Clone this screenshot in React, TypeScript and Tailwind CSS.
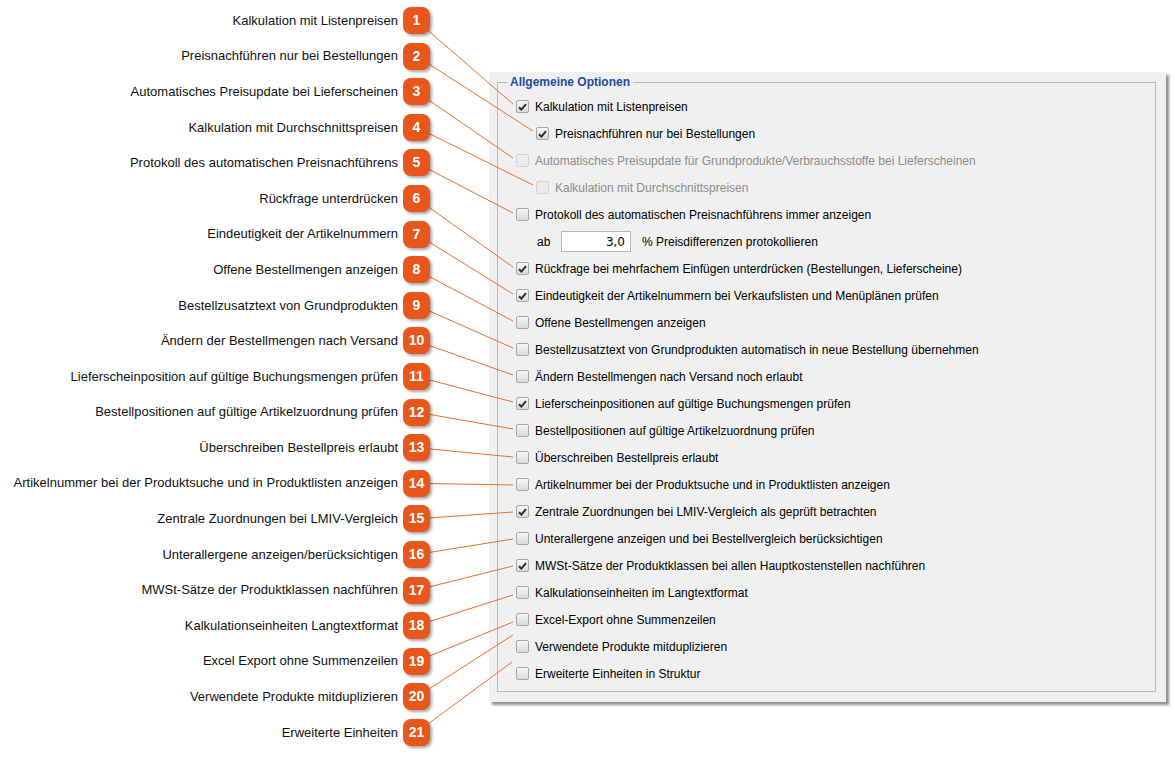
import React from "react";

const labels = [
  "Kalkulation mit Listenpreisen",
  "Preisnachführen nur bei Bestellungen",
  "Automatisches Preisupdate bei Lieferscheinen",
  "Kalkulation mit Durchschnittspreisen",
  "Protokoll des automatischen Preisnachführens",
  "Rückfrage unterdrücken",
  "Eindeutigkeit der Artikelnummern",
  "Offene Bestellmengen anzeigen",
  "Bestellzusatztext von Grundprodukten",
  "Ändern der Bestellmengen nach Versand",
  "Lieferscheinposition auf gültige Buchungsmengen prüfen",
  "Bestellpositionen auf gültige Artikelzuordnung prüfen",
  "Überschreiben Bestellpreis erlaubt",
  "Artikelnummer bei der Produktsuche und in Produktlisten anzeigen",
  "Zentrale Zuordnungen bei LMIV-Vergleich",
  "Unterallergene anzeigen/berücksichtigen",
  "MWSt-Sätze der Produktklassen nachführen",
  "Kalkulationseinheiten Langtextformat",
  "Excel Export ohne Summenzeilen",
  "Verwendete Produkte mitduplizieren",
  "Erweiterte Einheiten",
];

type Option = {
  text?: string;
  checked?: boolean;
  disabled?: boolean;
  indent?: boolean;
  threshold?: boolean;
};

const options: Option[] = [
  { text: "Kalkulation mit Listenpreisen", checked: true },
  { text: "Preisnachführen nur bei Bestellungen", checked: true, indent: true },
  { text: "Automatisches Preisupdate für Grundprodukte/Verbrauchsstoffe bei Lieferscheinen", disabled: true },
  { text: "Kalkulation mit Durchschnittspreisen", disabled: true, indent: true },
  { text: "Protokoll des automatischen Preisnachführens immer anzeigen" },
  { threshold: true },
  { text: "Rückfrage bei mehrfachem Einfügen unterdrücken (Bestellungen, Lieferscheine)", checked: true },
  { text: "Eindeutigkeit der Artikelnummern bei Verkaufslisten und Menüplänen prüfen", checked: true },
  { text: "Offene Bestellmengen anzeigen" },
  { text: "Bestellzusatztext von Grundprodukten automatisch in neue Bestellung übernehmen" },
  { text: "Ändern Bestellmengen nach Versand noch erlaubt" },
  { text: "Lieferscheinpositionen auf gültige Buchungsmengen prüfen", checked: true },
  { text: "Bestellpositionen auf gültige Artikelzuordnung prüfen" },
  { text: "Überschreiben Bestellpreis erlaubt" },
  { text: "Artikelnummer bei der Produktsuche und in Produktlisten anzeigen" },
  { text: "Zentrale Zuordnungen bei LMIV-Vergleich als geprüft betrachten", checked: true },
  { text: "Unterallergene anzeigen und bei Bestellvergleich berücksichtigen" },
  { text: "MWSt-Sätze der Produktklassen bei allen Hauptkostenstellen nachführen", checked: true },
  { text: "Kalkulationseinheiten im Langtextformat" },
  { text: "Excel-Export ohne Summenzeilen" },
  { text: "Verwendete Produkte mitduplizieren" },
  { text: "Erweiterte Einheiten in Struktur" },
];

// leader line end points (x, y) per badge, in page coordinates
const rowY = (i: number) => 107 + 27 * i;
const leaderEnds: [number, number][] = [
  [513, rowY(0) - 3],
  [533, rowY(1) - 3],
  [513, rowY(2) - 3],
  [533, rowY(3) - 3],
  [513, rowY(4) - 2],
  [513, rowY(6) - 2],
  [513, rowY(7) - 2],
  [513, rowY(8) - 2],
  [513, rowY(9) - 2],
  [513, rowY(10) - 2],
  [513, rowY(11) - 2],
  [513, rowY(12) - 2],
  [513, rowY(13) - 1],
  [513, rowY(14)],
  [513, rowY(15)],
  [513, rowY(16)],
  [513, rowY(17)],
  [513, rowY(18) + 2],
  [513, 622],
  [513, 635],
  [512, 662],
];

function Checkbox({ checked, disabled }: { checked?: boolean; disabled?: boolean }) {
  return (
    <span
      className={`flex h-[13px] w-[13px] shrink-0 items-center justify-center rounded-[2px] border ${
        disabled
          ? "border-[#d4d4d4] bg-[#ececec]"
          : "border-[#a7a7a7] bg-gradient-to-b from-[#f7f7f7] to-[#dadada]"
      }`}
    >
      {checked && (
        <svg width="9" height="8" viewBox="0 0 9 8">
          <path d="M1 4.2 L3.4 6.6 L8 1.2" fill="none" stroke="#2e2e2e" strokeWidth="2" />
        </svg>
      )}
    </span>
  );
}

export default function App() {
  return (
    <div
      className="relative flex h-[758px] w-[1175px] overflow-hidden bg-white text-black"
      style={{ fontFamily: '"Liberation Sans", Arial, sans-serif' }}
    >
      {/* left labels with numbered badges */}
      <div className="w-[430px] shrink-0 pt-[7px]">
        {labels.map((label, i) => (
          <div key={i} className="flex h-[35.6px] items-start justify-end">
            <div className="flex h-[27px] items-center gap-[5px]">
              <span className="whitespace-nowrap text-[13px] text-[#111]">{label}</span>
              <span className="relative z-10 flex h-[27px] w-[27px] items-center justify-center rounded-[8px] bg-[#e8561b] text-[14px] font-bold text-white shadow-[2px_2px_3px_rgba(0,0,0,0.35)]">
                {i + 1}
              </span>
            </div>
          </div>
        ))}
      </div>

      {/* options panel */}
      <div className="ml-[59px] mt-[72px] flex h-[630px] w-[677px] shrink-0 flex-col rounded-tl-[3px] bg-[#f0f0f0] pb-[10px] pl-[8px] pr-[10px] pt-[3px] shadow-[3px_3px_3px_rgba(0,0,0,0.45)]">
        <fieldset className="flex-1 border border-[#b7b7c9]">
          <legend className="ml-[9px] px-[3px] text-[12px] font-bold leading-[14px] text-[#1d4c9e]">
            Allgemeine Optionen
          </legend>
          <div className="pl-[18px] pt-[4px] text-[12px]">
            {options.map((o, i) =>
              o.threshold ? (
                <div key={i} className="flex h-[27px] items-center">
                  <span className="ml-[21px] w-[24px]">ab</span>
                  <span className="flex h-[21px] w-[70px] items-center justify-end border border-[#b4b4c6] bg-white pr-[5px] text-[12px]" style={{ fontFamily: '"DejaVu Sans", sans-serif' }}>
                    3,0
                  </span>
                  <span className="ml-[11px]">% Preisdifferenzen protokollieren</span>
                </div>
              ) : (
                <div key={i} className={`flex h-[27px] items-center gap-[6px] ${o.indent ? "pl-[20px]" : ""}`}>
                  <Checkbox checked={o.checked} disabled={o.disabled} />
                  <span className={`whitespace-nowrap ${o.disabled ? "text-[#8c8c8c]" : "text-black"}`}>
                    {o.text}
                  </span>
                </div>
              )
            )}
          </div>
        </fieldset>
      </div>

      {/* leader lines */}
      <svg className="pointer-events-none absolute inset-0 z-[5]" width="1175" height="758">
        {leaderEnds.map(([x, y], i) => (
          <line
            key={i}
            x1={416.5}
            y1={20.5 + 35.6 * i}
            x2={x}
            y2={y}
            stroke="#ec6d2e"
            strokeWidth="1"
          />
        ))}
      </svg>
    </div>
  );
}
